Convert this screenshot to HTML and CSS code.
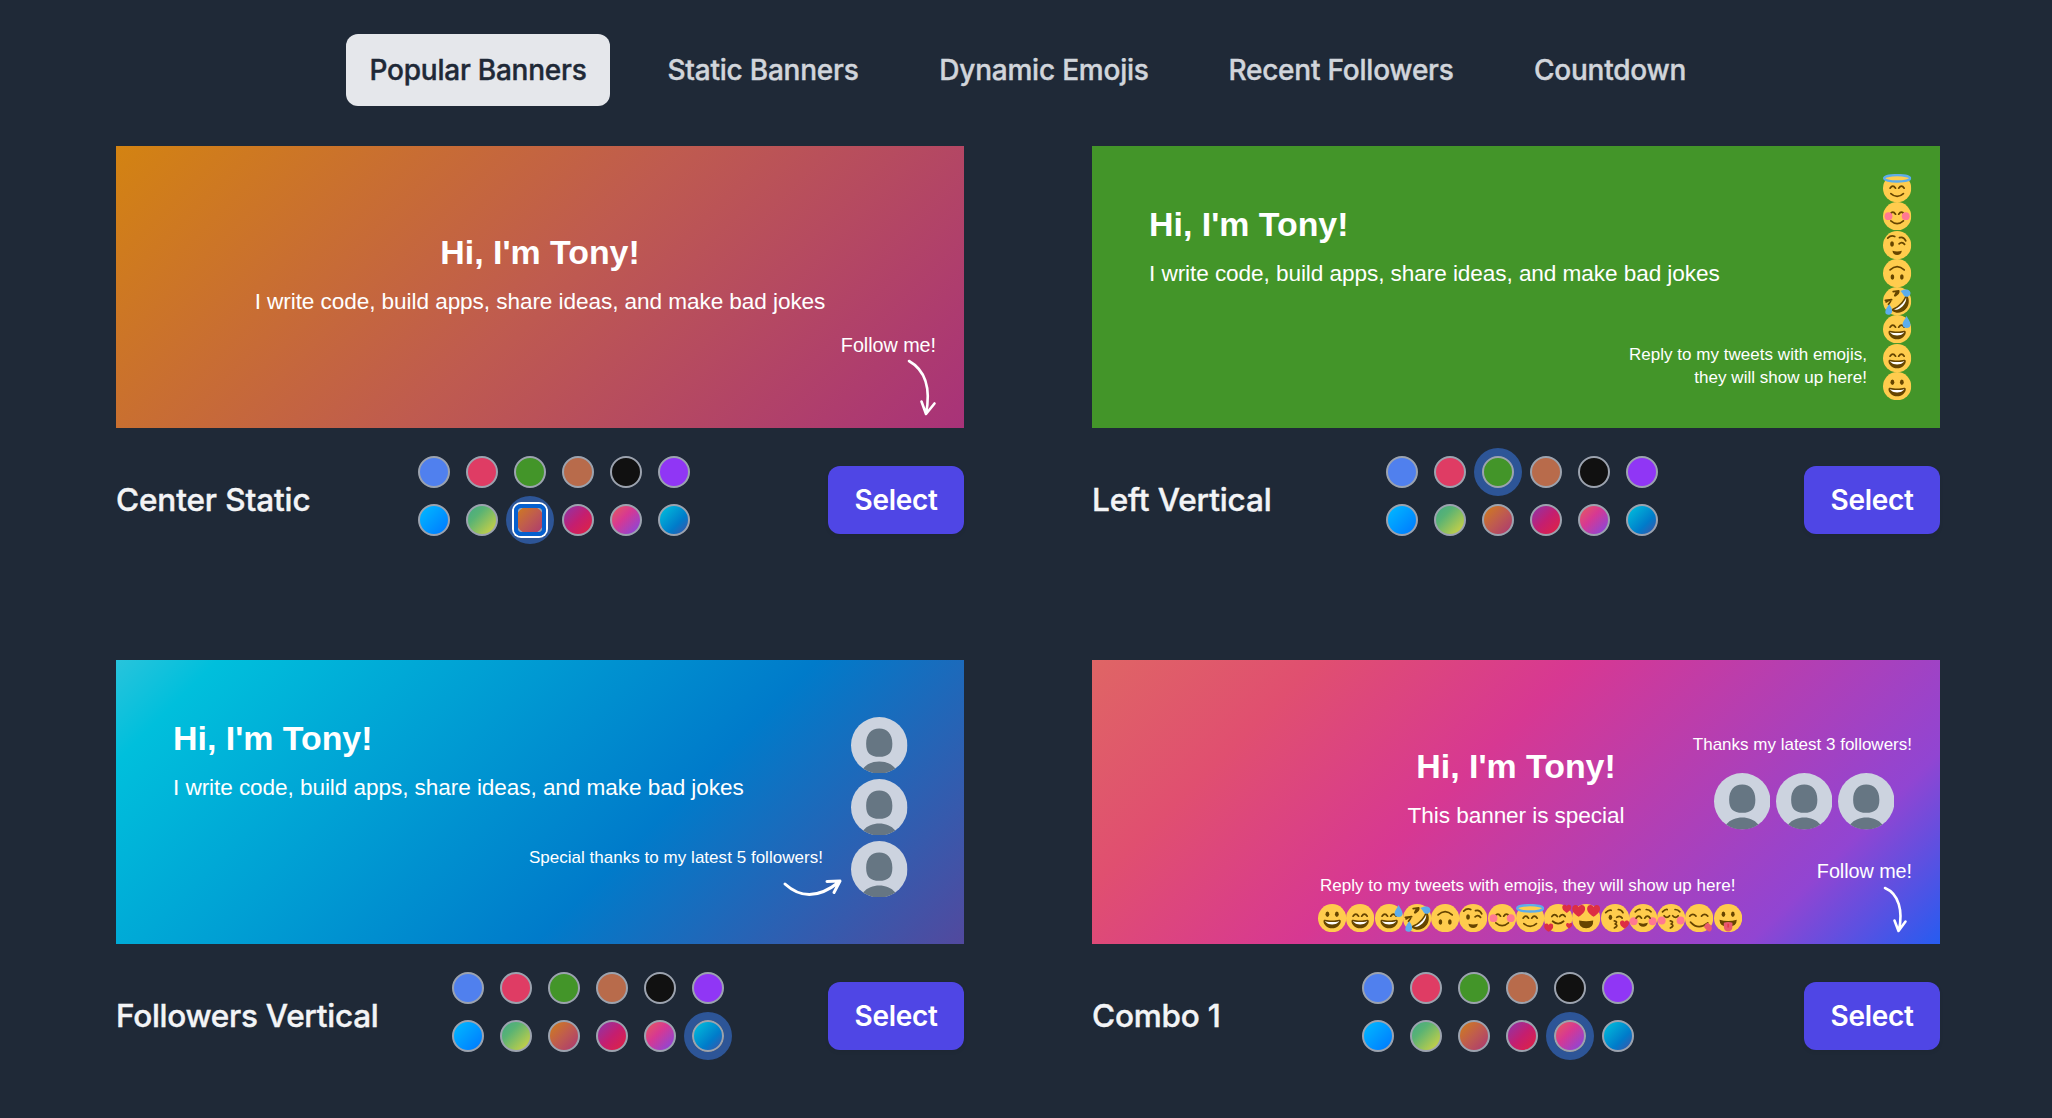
FILE: index.html
```html
<!DOCTYPE html>
<html lang="en">
<head>
<meta charset="utf-8">
<title>Banners</title>
<link rel="stylesheet" href="styles.css">
</head>
<body>
<svg class="sprite" aria-hidden="true">
  <defs>
    <symbol id="face" viewBox="0 0 36 36"><circle cx="18" cy="18" r="18" fill="#ffcc4d"/></symbol>
    <symbol id="grin-mouth" viewBox="0 0 36 36">
      <path fill="#664500" d="M18 21c-3.623 0-6.027-.422-9-1-.679-.131-2 0-2 2 0 4 4.595 9 11 9 6.404 0 11-5 11-9 0-2-1.321-2.132-2-2-2.973.578-5.377 1-9 1z"/>
      <path fill="#fff" d="M9 22s3 1 9 1 9-1 9-1-2 4-9 4-9-4-9-4z"/>
    </symbol>
    <symbol id="arc-eyes" viewBox="0 0 36 36"><path class="line" d="M9 15.500q3.500-5 7 0M20 15.500q3.500-5 7 0"/></symbol>
    <symbol id="heart" viewBox="0 0 10 10"><path fill="#dd2e44" d="M5 9.500C1 7 0 5 .2 3 .5.5 3.500-.2 5 2.200 6.500-.2 9.500.5 9.800 3 10 5 9 7 5 9.500z"/></symbol>

    <symbol id="grinning" viewBox="0 0 36 36"><use href="#face"/><ellipse cx="12" cy="13" rx="2.400" ry="3.500" fill="#664500"/><ellipse cx="24" cy="13" rx="2.400" ry="3.500" fill="#664500"/><use href="#grin-mouth"/></symbol>
    <symbol id="smile" viewBox="0 0 36 36"><use href="#face"/><use href="#arc-eyes"/><use href="#grin-mouth"/></symbol>
    <symbol id="sweat" viewBox="0 0 36 36"><use href="#face"/><use href="#arc-eyes"/><use href="#grin-mouth"/><path fill="#5dadec" d="M30 1c1.500 4 5 7 5 11 0 3-2 4.500-4.700 4.500S25 15 25 12c0-4 4-7 5-11z"/></symbol>
    <symbol id="rofl" viewBox="0 0 36 36"><use href="#face"/>
      <path fill="#664500" d="M31 11c2.500 4 3 12-2 17-5 5.500-12 6-17 2.500-1.500-1.200-.8-2.500.3-3C20 24 25 19 28 12c.5-1.500 2-2.500 3-1z"/>
      <path fill="#fff" d="M29.500 13.500c.5 3-1 7.500-4.500 11s-7.500 5-11 4.500C20 26.500 26.500 21 29.500 13.500z"/>
      <path class="line" d="M4 19q6-4 6-2 0 2-3 5M15 11q3-7 5-5 0 2-4 5M13 6l7-1M3 17l8-1"/>
      <path fill="#5dadec" d="M22 5c4-2 9-3 12 0 3 4-1 8-5 7.500-3-.5-3.500-5-7-7.500zM8 22c3 4 4 7 3.500 10-.8 3-5 4.500-7.500 2.500-3-3 1-9 4-12.500z"/></symbol>
    <symbol id="upside" viewBox="0 0 36 36"><use href="#face"/><ellipse cx="12" cy="23" rx="2.300" ry="3.500" fill="#664500"/><ellipse cx="24" cy="23" rx="2.300" ry="3.500" fill="#664500"/><path class="line" d="M9 14q9-8.500 18 0"/></symbol>
    <symbol id="wink" viewBox="0 0 36 36"><use href="#face"/><ellipse cx="11.500" cy="16.500" rx="2.400" ry="3.500" fill="#664500"/><path class="line" d="M6 9q4-4 9-2M21 8.500q5-2 8 4M20.500 16.500q3.500-3.500 7 .5"/><path fill="#664500" d="M12 25q6 2 12 0-1 5.500-6 5.500T12 25z"/></symbol>
    <symbol id="blush" viewBox="0 0 36 36"><use href="#face"/><use href="#arc-eyes"/><circle cx="7" cy="18" r="5" fill="#ff7892"/><circle cx="29" cy="18" r="5" fill="#ff7892"/><path class="line" d="M10 24q8 7 16 0"/></symbol>
    <symbol id="halo" viewBox="0 0 36 36"><use href="#face"/><path class="line" d="M9 18q3.500-5 7 0M20 18q3.500-5 7 0M10 25q8 7 16 0"/><ellipse cx="18" cy="5.500" rx="16.500" ry="4" fill="#ffcc4d" stroke="#5dadec" stroke-width="3"/></symbol>
    <symbol id="hearts" viewBox="0 0 36 36"><use href="#face"/><path class="line" d="M10 16q3.500-5 7 0M20 16q3.500-5 7 0M11 22q7 6 14 0"/><use href="#heart" x="23" y="0" width="12" height="12"/><use href="#heart" x="0" y="24" width="12" height="12"/><use href="#heart" x="28" y="23" width="8" height="9"/></symbol>
    <symbol id="heart-eyes" viewBox="0 0 36 36"><use href="#face"/><use href="#heart" x="0" y="0" width="17" height="17"/><use href="#heart" x="19" y="0" width="17" height="17"/><path fill="#664500" d="M9 21q9 2 18 0 .5 10-9 10T9 21z"/></symbol>
    <symbol id="kiss-heart" viewBox="0 0 36 36"><use href="#face"/><ellipse cx="12" cy="17" rx="2.300" ry="3.300" fill="#664500"/><path class="line" d="M6 11q4-4 7-3M22 7q4 0 6 4M20 17q4-3 7 1M17 21.500q5 1 1 4 5 2-1 5"/><use href="#heart" x="24" y="20" width="12" height="12"/></symbol>
    <symbol id="relaxed" viewBox="0 0 36 36"><use href="#face"/><circle cx="6" cy="22" r="5" fill="#ff7892"/><circle cx="30" cy="22" r="5" fill="#ff7892"/><path class="line" d="M9 18q3.500-5 7 0M20 18q3.500-5 7 0M8 10q4-4 6-3M22 7q4 0 6 3"/><path fill="#664500" d="M12 24q6 2 12 0-1 5-6 5t-6-5z"/></symbol>
    <symbol id="kiss" viewBox="0 0 36 36"><use href="#face"/><circle cx="6" cy="21" r="5" fill="#ff7892"/><circle cx="30" cy="21" r="5" fill="#ff7892"/><path class="line" d="M9 15q3.500 4 7 0M20 15q3.500 4 7 0M7 10q4-4 6-3M23 7q4 0 6 3M17 21.500q5 1 1 4 5 2-1 5"/></symbol>
    <symbol id="yum" viewBox="0 0 36 36"><use href="#face"/><path class="line" d="M6 15.500q4-4.500 8 0M21 15.500q4-4.500 8 0M7 23q10 11 22 1"/><path fill="#e8596e" d="M24 29q2-4 5-5l4 3q3 5-1 8-3 1-8-6z"/></symbol>
    <symbol id="tongue" viewBox="0 0 36 36"><use href="#face"/><ellipse cx="12" cy="13" rx="2.300" ry="3.500" fill="#664500"/><ellipse cx="24" cy="13" rx="2.300" ry="3.500" fill="#664500"/><path fill="#664500" d="M7 20q11 3 22 0 0 9-11 9T7 20z"/><path fill="#e8596e" d="M12.500 24q5.500-2 11 0v5q-.5 6-5.500 6t-5.500-6z"/><path d="M18 25v5" stroke="#dd2e44" stroke-width="1.500"/></symbol>

    <symbol id="avatar" viewBox="0 0 56 56">
      <circle cx="28" cy="28" r="28" fill="#ccd3df"/>
      <path fill="#667683" d="M28 11.500c8 0 13 5.500 13 15 0 9-4 13-13 13s-13-4-13-13c0-9.500 5-15 13-15zM12 51.100C16 46 22 44 28 44s12 2 16 7.100A28 28 0 0 1 12 51.100z"/>
    </symbol>
  </defs>
</svg>

<main class="page">
  <nav class="tabs">
    <a class="tab tab-popular active">Popular Banners</a>
    <a class="tab tab-static">Static Banners</a>
    <a class="tab tab-emojis">Dynamic Emojis</a>
    <a class="tab tab-followers">Recent Followers</a>
    <a class="tab tab-countdown">Countdown</a>
  </nav>

  <div class="grid">
    <section class="card">
      <div class="banner bg-orange centered">
        <h1>Hi, I'm Tony!</h1>
        <p>I write code, build apps, share ideas, and make bad jokes</p>
        <div class="follow">Follow me!</div>
        <svg class="arrow arrow-down" viewBox="0 0 30 58"><path d="M3 3C19 12 25 30 20 56M15.500 43.500L20 56 28.500 45.500"/></svg>
      </div>
      <div class="meta">
        <h2 class="name-center">Center Static</h2>
        <div class="swatches">
          <i class="bg-blue"></i><i class="bg-red"></i><i class="bg-green"></i><i class="bg-brown"></i><i class="bg-black"></i><i class="bg-purple"></i>
          <i class="bg-sky"></i><i class="bg-lime"></i><i class="bg-orange selected focused"></i><i class="bg-berry"></i><i class="bg-pink"></i><i class="bg-ocean"></i>
        </div>
        <button>Select</button>
      </div>
    </section>

    <section class="card">
      <div class="banner bg-green">
        <h1>Hi, I'm Tony!</h1>
        <p>I write code, build apps, share ideas, and make bad jokes</p>
        <div class="note note-reply">Reply to my tweets with emojis,<br>they will show up here!</div>
        <div class="emojis emojis-column">
          <svg><use href="#halo"/></svg><svg><use href="#blush"/></svg><svg><use href="#wink"/></svg><svg><use href="#upside"/></svg><svg><use href="#rofl"/></svg><svg><use href="#sweat"/></svg><svg><use href="#smile"/></svg><svg><use href="#grinning"/></svg>
        </div>
      </div>
      <div class="meta">
        <h2 class="name-left">Left Vertical</h2>
        <div class="swatches">
          <i class="bg-blue"></i><i class="bg-red"></i><i class="bg-green selected"></i><i class="bg-brown"></i><i class="bg-black"></i><i class="bg-purple"></i>
          <i class="bg-sky"></i><i class="bg-lime"></i><i class="bg-orange"></i><i class="bg-berry"></i><i class="bg-pink"></i><i class="bg-ocean"></i>
        </div>
        <button>Select</button>
      </div>
    </section>

    <section class="card">
      <div class="banner tall bg-ocean">
        <h1>Hi, I'm Tony!</h1>
        <p>I write code, build apps, share ideas, and make bad jokes</p>
        <div class="note note-special">Special thanks to my latest 5 followers!</div>
        <svg class="arrow arrow-right" viewBox="0 0 62 24"><path d="M3 6Q27 28 57 4M45 3.500L58 3 52 14.500"/></svg>
        <div class="avatars avatars-column"><svg><use href="#avatar"/></svg><svg><use href="#avatar"/></svg><svg><use href="#avatar"/></svg></div>
      </div>
      <div class="meta">
        <h2 class="name-followers">Followers Vertical</h2>
        <div class="swatches">
          <i class="bg-blue"></i><i class="bg-red"></i><i class="bg-green"></i><i class="bg-brown"></i><i class="bg-black"></i><i class="bg-purple"></i>
          <i class="bg-sky"></i><i class="bg-lime"></i><i class="bg-orange"></i><i class="bg-berry"></i><i class="bg-pink"></i><i class="bg-ocean selected"></i>
        </div>
        <button>Select</button>
      </div>
    </section>

    <section class="card">
      <div class="banner tall centered bg-pink">
        <h1>Hi, I'm Tony!</h1>
        <p>This banner is special</p>
        <div class="note note-thanks">Thanks my latest 3 followers!</div>
        <div class="avatars avatars-row"><svg><use href="#avatar"/></svg><svg><use href="#avatar"/></svg><svg><use href="#avatar"/></svg></div>
        <div class="follow follow-low">Follow me!</div>
        <svg class="arrow arrow-small" viewBox="0 0 24 48"><path d="M3 3C17 9 21 26 17 45M12.500 35.500L16.500 46 23.500 36.500"/></svg>
        <div class="note note-line">Reply to my tweets with emojis, they will show up here!</div>
        <div class="emojis emojis-row">
          <svg><use href="#grinning"/></svg><svg><use href="#smile"/></svg><svg><use href="#sweat"/></svg><svg><use href="#rofl"/></svg><svg><use href="#upside"/></svg><svg><use href="#wink"/></svg><svg><use href="#blush"/></svg><svg><use href="#halo"/></svg><svg><use href="#hearts"/></svg><svg><use href="#heart-eyes"/></svg><svg><use href="#kiss-heart"/></svg><svg><use href="#relaxed"/></svg><svg><use href="#kiss"/></svg><svg><use href="#yum"/></svg><svg><use href="#tongue"/></svg>
        </div>
      </div>
      <div class="meta">
        <h2 class="name-combo">Combo 1</h2>
        <div class="swatches">
          <i class="bg-blue"></i><i class="bg-red"></i><i class="bg-green"></i><i class="bg-brown"></i><i class="bg-black"></i><i class="bg-purple"></i>
          <i class="bg-sky"></i><i class="bg-lime"></i><i class="bg-orange"></i><i class="bg-berry"></i><i class="bg-pink selected"></i><i class="bg-ocean"></i>
        </div>
        <button>Select</button>
      </div>
    </section>
  </div>
</main>
</body>
</html>
```
FILE: styles.css
```css
* { box-sizing: border-box; }
body { margin: 0; min-height: 1118px; background: #1f2937; font-family: Inter, "Liberation Sans", sans-serif; }
.sprite { position: absolute; width: 0; height: 0; }
.page { width: 1824px; margin-left: 116px; padding-top: 34px; }

.tabs { display: flex; justify-content: center; gap: 32px; height: 72px; margin-bottom: 40px; }
.tab { display: flex; align-items: center; justify-content: center; border-radius: 12px; color: #d1d5db; font-size: 28px; font-weight: 500; letter-spacing: -.22px; white-space: nowrap; -webkit-text-stroke: .4px currentColor; }
.tab.active { background: #e5e7eb; color: #1f2937; }
.tab-popular { width: 264px; }
.tab-static { width: 242px; }
.tab-emojis { width: 256px; }
.tab-followers { width: 274px; }
.tab-countdown { width: 200px; }

.grid { display: grid; grid-template-columns: 848px 848px; column-gap: 128px; row-gap: 124px; }

.banner { position: relative; height: 282px; padding: 57px 57px 0; color: #fff; font-family: "Liberation Sans", Arial, sans-serif; overflow: hidden; }
.banner.tall { height: 284px; }
.banner.centered { padding-top: 85px; text-align: center; }
.banner h1 { margin: 0; font-size: 33.900px; line-height: 42px; font-weight: 700; }
.banner p { margin: 14px 0 0; font-size: 22.600px; line-height: 30px; letter-spacing: -.08px; white-space: nowrap; }

.note, .follow, .arrow, .emojis, .avatars { position: absolute; }
.note { font-size: 17px; line-height: 22.600px; letter-spacing: .03px; text-align: right; white-space: nowrap; }
.follow { right: 28px; top: 187px; font-size: 19.800px; line-height: 24px; letter-spacing: -.05px; }
.follow-low { top: 199px; }
.note-reply { right: 73px; top: 198px; }
.note-special { right: 141px; top: 187px; }
.note-thanks { right: 28px; top: 74px; letter-spacing: 0; }
.note-line { left: 228px; top: 215px; }

.arrow { fill: none; stroke: #fff; stroke-width: 2.600px; overflow: visible; stroke-linecap: round; stroke-linejoin: round; }
.arrow-down { left: 790px; top: 212px; width: 30px; height: 58px; }
.arrow-right { left: 666px; top: 218px; width: 62px; height: 24px; stroke-width: 3px; }
.arrow-small { left: 790px; top: 225px; width: 24px; height: 48px; }

.emojis, .avatars { display: flex; }
.emojis svg { width: 28.270px; height: 28.270px; flex: none; }
.line { fill: none; stroke: #664500; stroke-width: 2.200px; stroke-linecap: round; stroke-linejoin: round; }
.emojis-column { flex-direction: column; left: 791.300px; top: 28px; }
.emojis-row { left: 226px; top: 244px; }
.avatars { gap: 5.700px; }
.avatars svg { width: 56.500px; height: 56.500px; flex: none; }
.avatars-column { flex-direction: column; left: 735px; top: 56.500px; }
.avatars-row { left: 621.600px; top: 113.200px; }

.meta { display: flex; justify-content: space-between; align-items: flex-end; height: 80px; margin-top: 28px; }
.meta h2 { margin: 0 0 2px; color: #f3f4f6; font-size: 31.500px; line-height: 68px; font-weight: 500; letter-spacing: -.2px; white-space: nowrap; -webkit-text-stroke: .4px currentColor; }
.name-center { width: 196px; }
.name-left { width: 180px; }
.meta .name-center, .meta .name-left { letter-spacing: -.12px; }
.name-followers { width: 264px; }
.meta .name-followers { letter-spacing: -.27px; }
.name-combo { width: 132px; }
.meta button { width: 136px; height: 68px; margin: 0 0 2px; padding: 0; border: 0; border-radius: 12px; background: #4f46e5; color: #fff; font: 600 28px Inter, sans-serif; letter-spacing: -.3px; box-shadow: 0 2px 4px rgba(0, 0, 0, .06); }
.swatches { display: grid; grid-template-columns: repeat(6, 32px); gap: 16px; margin-right: 32px; }
.swatches i { width: 32px; height: 32px; border: 2px solid #9ca3af; border-radius: 50%; background-origin: border-box; }
.swatches .selected { box-shadow: 0 0 0 8px #2d5597; }
.swatches .focused { position: relative; }
.swatches .focused::after { content: ""; position: absolute; inset: -2px; border: 4px solid #0660cf; border-radius: 7px; box-shadow: 0 0 0 2px #fff; }

.bg-blue { background: #5080ee; }
.bg-red { background: #df3c64; }
.bg-green { background: #439529; }
.bg-brown { background: #b86b4b; }
.bg-black { background: #111; }
.bg-purple { background: #9036f5; }
.bg-sky { background: linear-gradient(135deg, #00c0ff, #0072ff); }
.bg-lime { background: linear-gradient(135deg, #3fa889 0%, #59b374 35%, #e8d839 100%); }
.bg-orange { background: linear-gradient(135deg, #d38312, #bf5b4f 50%, #a83279); }
.bg-berry { background: linear-gradient(135deg, #833ab4, #c41e70 50%, #e62339); }
.bg-pink { background: linear-gradient(135deg, #df6565 0%, #e04f70 20%, #d73892 43%, #9145d2 83%, #265cf0 100%); }
.bg-ocean { background: linear-gradient(135deg, #28c4dc 0%, #00bfdc 9%, #007bca 62%, #52499e 100%); }
```
